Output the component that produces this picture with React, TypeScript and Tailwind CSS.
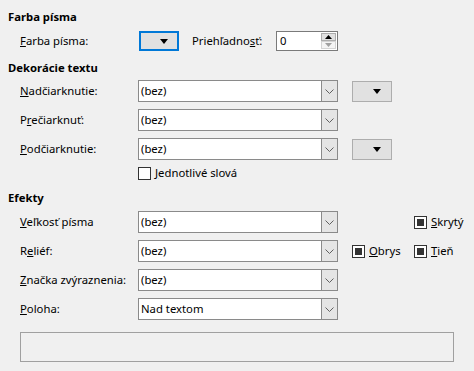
import React from 'react';

const font = { fontFamily: '"Noto Sans", "Open Sans", sans-serif' };

function Chevron() {
  return (
    <svg width="9" height="5" viewBox="0 0 9 5" fill="none">
      <path d="M0.5 0.5L4.5 4.5L8.5 0.5" stroke="#606060" strokeWidth="1" />
    </svg>
  );
}

function Select({ value }: { value: string }) {
  return (
    <div className="flex h-[22px] w-[200px] border border-[#8a8a8a] bg-white">
      <div className="flex-1 pl-[2px] leading-[20px]">{value}</div>
      <div className="flex w-[16px] items-center justify-center border-l border-[#8a8a8a] bg-[#e5e5e5]">
        <Chevron />
      </div>
    </div>
  );
}

function Triangle() {
  return (
    <svg width="8" height="5" viewBox="0 0 8 5">
      <path d="M0 0H8L4 5Z" fill="#000" />
    </svg>
  );
}

function ColorButton({ focused }: { focused?: boolean }) {
  return (
    <div
      className={
        focused
          ? 'flex h-[20px] w-[40px] items-center justify-end border-2 border-[#0078d7] bg-[#e1e1e1] pr-[9px]'
          : 'flex h-[21px] w-[40px] items-center justify-end border border-[#adadad] bg-[#e1e1e1] pr-[10px]'
      }
    >
      <Triangle />
    </div>
  );
}

function Check({ checked }: { checked?: boolean }) {
  return (
    <div className="flex h-[13px] w-[13px] shrink-0 items-center justify-center border border-[#333333] bg-white">
      {checked && <div className="h-[7px] w-[7px] bg-[#333333]" />}
    </div>
  );
}

function Label({ children }: { children: React.ReactNode }) {
  return <div className="w-[118px] shrink-0 whitespace-nowrap pl-[12px]">{children}</div>;
}

export default function App() {
  return (
    <div
      className="h-[371px] w-[474px] overflow-hidden whitespace-nowrap bg-[#f0f0f0] px-2 pt-[8px] text-[11.3px] text-black"
      style={font}
    >
      {/* Farba písma */}
      <div className="h-[18px] font-bold leading-[18px]">Farba písma</div>
      <div className="mt-[5px] flex h-[20px] items-center">
        <Label>
          <u>F</u>arba písma:
        </Label>
        <div className="ml-[13px]">
          <ColorButton focused />
        </div>
        <div className="ml-[13px] w-[84px]">
          Priehľadno<u>s</u>ť:
        </div>
        <div className="flex h-[20px] w-[62px] border border-[#7a7a7a] bg-white">
          <div className="flex-1 pl-[3px] leading-[18px]">0</div>
          <div className="flex w-[16px] flex-col py-[1px] pr-[1px]">
            <div className="flex h-[9px] items-center justify-center border border-[#adadad] bg-[#e1e1e1]">
              <svg width="7" height="4" viewBox="0 0 7 4">
                <path d="M0 4L3.5 0L7 4Z" fill="#000" />
              </svg>
            </div>
            <div className="flex h-[8px] items-center justify-center border border-[#d4d4d4] bg-[#f4f4f4]">
              <svg width="7" height="4" viewBox="0 0 7 4">
                <path d="M0 0H7L3.5 4Z" fill="#a0a0a0" />
              </svg>
            </div>
          </div>
        </div>
      </div>

      {/* Dekorácie textu */}
      <div className="mt-[8px] h-[18px] font-bold leading-[18px]">Dekorácie textu</div>
      <div className="mt-[3px] flex flex-col gap-[7px]">
        <div className="flex h-[22px] items-center">
          <Label>
            <u>N</u>adčiarknutie:
          </Label>
          <div className="ml-[12px]">
            <Select value="(bez)" />
          </div>
          <div className="ml-[14px]">
            <ColorButton />
          </div>
        </div>
        <div className="flex h-[22px] items-center">
          <Label>
            P<u>r</u>ečiarknuť:
          </Label>
          <div className="ml-[12px]">
            <Select value="(bez)" />
          </div>
        </div>
        <div className="flex h-[22px] items-center">
          <Label>
            <u>P</u>odčiarknutie:
          </Label>
          <div className="ml-[12px]">
            <Select value="(bez)" />
          </div>
          <div className="ml-[14px]">
            <ColorButton />
          </div>
        </div>
      </div>
      <div className="mt-[6px] flex h-[14px] items-center pl-[130px]">
        <Check />
        <span className="ml-[4px]">
          <u>J</u>ednotlivé slová
        </span>
      </div>

      {/* Efekty */}
      <div className="mt-[9px] h-[18px] font-bold leading-[18px]">Efekty</div>
      <div className="mt-[4px] flex flex-col gap-[7px]">
        <div className="flex h-[22px] items-center">
          <Label>
            <u>V</u>eľkosť písma
          </Label>
          <div className="ml-[12px]">
            <Select value="(bez)" />
          </div>
          <div className="ml-[76px] flex items-center gap-[4px]">
            <Check checked />
            <span>
              <u>S</u>krytý
            </span>
          </div>
        </div>
        <div className="flex h-[22px] items-center">
          <Label>
            R<u>e</u>liéf:
          </Label>
          <div className="ml-[12px]">
            <Select value="(bez)" />
          </div>
          <div className="ml-[14px] flex w-[62px] items-center gap-[4px]">
            <Check checked />
            <span>
              <u>O</u>brys
            </span>
          </div>
          <div className="flex items-center gap-[4px]">
            <Check checked />
            <span>
              <u>T</u>ieň
            </span>
          </div>
        </div>
        <div className="flex h-[22px] items-center">
          <Label>
            <u>Z</u>načka zvýraznenia:
          </Label>
          <div className="ml-[12px]">
            <Select value="(bez)" />
          </div>
        </div>
        <div className="flex h-[22px] items-center">
          <Label>
            <u>P</u>oloha:
          </Label>
          <div className="ml-[12px]">
            <Select value="Nad textom" />
          </div>
        </div>
      </div>

      {/* Preview */}
      <div className="ml-[12px] mt-[12px] h-[30px] w-[434px] border border-[#a0a0a0] bg-[#f0f0f0]" />
    </div>
  );
}
